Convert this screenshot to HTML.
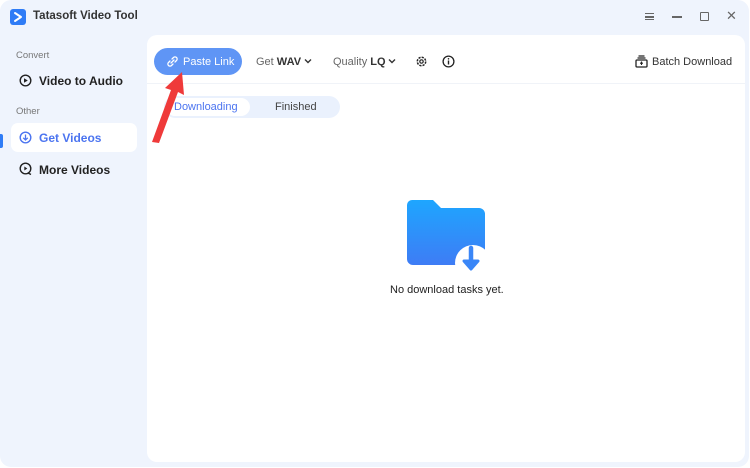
<!DOCTYPE html>
<html><head><meta charset="utf-8"><style>
*{margin:0;padding:0;box-sizing:border-box}
body{width:750px;height:468px;background:#fff;font-family:"Liberation Sans",sans-serif;position:relative;overflow:hidden}
.win{position:absolute;left:0;top:0;width:749px;height:467px;background:#eff4fd;border-radius:11px}
.panel{position:absolute;left:147px;top:35px;width:598px;height:427px;background:#fff;border-radius:10px}
.abs{position:absolute}
.t{font-size:13px;color:#222;white-space:nowrap}
</style></head><body>
<div class="win">
  <svg class="abs" style="left:10px;top:9px" width="16" height="16" viewBox="0 0 16 16"><rect width="16" height="16" rx="3" fill="#2f7cf6"/><path d="M5 4 L11 8 L5 12" stroke="#fff" stroke-width="2" fill="none" stroke-linecap="round" stroke-linejoin="round"/></svg>
  <div class="abs t" style="left:33px;top:10px;font-size:11.5px;font-weight:bold;color:#333">Tatasoft Video Tool</div>
  <div class="abs" style="left:645px;top:13px;width:9px;height:7px;border-top:1.5px solid #666;border-bottom:1.5px solid #666"></div>
  <div class="abs" style="left:645px;top:16px;width:9px;height:1.5px;background:#666"></div>
  <div class="abs" style="left:672px;top:16px;width:10px;height:1.5px;background:#666"></div>
  <div class="abs" style="left:700px;top:12px;width:9px;height:9px;border:1.5px solid #666;border-radius:1px"></div>
  <div class="abs" style="left:726px;top:8px;font-size:13px;color:#666">✕</div>

  <div class="abs" style="left:16px;top:50px;font-size:9.5px;color:#777">Convert</div>
  <svg class="abs" style="left:19px;top:74px" width="13" height="13" viewBox="0 0 13 13"><circle cx="6.5" cy="6.5" r="5.3" fill="none" stroke="#222" stroke-width="1.4"/><path d="M5 4.3 L8.8 6.5 L5 8.7Z" fill="#222"/></svg>
  <div class="abs t" style="left:39px;top:74px;font-size:12px;font-weight:bold">Video to Audio</div>
  <div class="abs" style="left:16px;top:106px;font-size:9.5px;color:#777">Other</div>
  <div class="abs" style="left:0;top:134px;width:3px;height:14px;background:#2f7cf6;border-radius:0 2px 2px 0"></div>
  <div class="abs" style="left:11px;top:123px;width:126px;height:29px;background:#fff;border-radius:7px"></div>
  <svg class="abs" style="left:19px;top:131px" width="13" height="13" viewBox="0 0 13 13"><circle cx="6.5" cy="6.5" r="5.3" fill="none" stroke="#4b74f0" stroke-width="1.4"/><path d="M6.5 3.5V9M4.2 6.8L6.5 9L8.8 6.8" fill="none" stroke="#4b74f0" stroke-width="1.3"/></svg>
  <div class="abs t" style="left:39px;top:131px;font-size:12px;font-weight:bold;color:#4b74f0">Get Videos</div>
  <svg class="abs" style="left:19px;top:162px" width="13" height="14" viewBox="0 0 13 14"><circle cx="6.5" cy="6.5" r="5.3" fill="none" stroke="#222" stroke-width="1.4"/><path d="M5.3 4.5 L8.3 6.5 L5.3 8.5Z" fill="#222"/><path d="M9 11 L12 12.5" stroke="#222" stroke-width="1.4"/></svg>
  <div class="abs t" style="left:39px;top:163px;font-size:12px;font-weight:bold">More Videos</div>

  <div class="panel"></div>
  <div class="abs" style="left:147px;top:83px;width:598px;height:1px;background:#f0f3f8"></div>
  <div class="abs" style="left:154px;top:48px;width:88px;height:27px;background:#5f95f5;border-radius:14px"></div>
  <svg class="abs" style="left:166px;top:55px" width="13" height="13" viewBox="0 0 13 13"><path d="M5 8 L8 5 M4 6 L2.5 7.5a2 2 0 0 0 3 3 L7 9 M9 7 L10.5 5.5a2 2 0 0 0-3-3 L6 4" fill="none" stroke="#fff" stroke-width="1.3" stroke-linecap="round"/></svg>
  <div class="abs t" style="left:183px;top:56px;font-size:11px;color:#fff">Paste Link</div>
  <div class="abs t" style="left:256px;top:56px;font-size:11px;color:#666">Get <b style="color:#333;font-weight:bold">WAV</b></div>
  <svg class="abs" style="left:304px;top:58px" width="8" height="6"><path d="M1 1.5L4 4.5L7 1.5" fill="none" stroke="#333" stroke-width="1.4"/></svg>
  <div class="abs t" style="left:333px;top:56px;font-size:11px;color:#666">Quality <b style="color:#333;font-weight:bold">LQ</b></div>
  <svg class="abs" style="left:388px;top:58px" width="8" height="6"><path d="M1 1.5L4 4.5L7 1.5" fill="none" stroke="#333" stroke-width="1.4"/></svg>
  <svg class="abs" style="left:415px;top:55px" width="13" height="13" viewBox="0 0 13 13"><circle cx="6.5" cy="6.5" r="4.2" fill="none" stroke="#222" stroke-width="1.5" stroke-dasharray="2.2 1.1"/><circle cx="6.5" cy="6.5" r="1.7" fill="none" stroke="#222" stroke-width="1.2"/></svg>
  <svg class="abs" style="left:442px;top:55px" width="13" height="13" viewBox="0 0 13 13"><circle cx="6.5" cy="6.5" r="5.4" fill="none" stroke="#222" stroke-width="1.3"/><path d="M6.5 5.5V9.5" stroke="#222" stroke-width="1.4"/><circle cx="6.5" cy="3.8" r=".8" fill="#222"/></svg>
  <svg class="abs" style="left:635px;top:55px" width="13" height="13" viewBox="0 0 13 13"><rect x="1" y="5" width="11" height="7" rx="1" fill="none" stroke="#222" stroke-width="1.3"/><path d="M2.5 3H10.5M3.5 1H9.5" stroke="#222" stroke-width="1.2"/><path d="M6.5 6.5V10M5 8.2H8" stroke="#222" stroke-width="1.1"/></svg>
  <div class="abs t" style="left:652px;top:56px;font-size:11px;color:#333">Batch Download</div>

  <div class="abs" style="left:164px;top:96px;width:176px;height:22px;background:#eaf1fd;border-radius:11px"></div>
  <div class="abs" style="left:166px;top:98px;width:84px;height:18px;background:#fff;border-radius:9px"></div>
  <div class="abs t" style="left:174px;top:101px;font-size:11px;color:#4b74f0">Downloading</div>
  <div class="abs t" style="left:275px;top:101px;font-size:11px;color:#444">Finished</div>

  <svg class="abs" style="left:406px;top:199px" width="80" height="74" viewBox="0 0 80 74">
    <defs><linearGradient id="g" x1="0" y1="0" x2="0" y2="1"><stop offset="0" stop-color="#1ea6ff"/><stop offset="1" stop-color="#3e7cf5"/></linearGradient></defs>
    <path d="M6 1H27L35 9H73a6 6 0 0 1 6 6V60a6 6 0 0 1-6 6H7a6 6 0 0 1-6-6V6a5 5 0 0 1 5-5Z" fill="url(#g)"/>
    <circle cx="67" cy="64" r="18" fill="#fff"/>
    <path d="M65 49V67" stroke="#3a86f7" stroke-width="4.5" stroke-linecap="round"/>
    <path d="M58 62L65 70L72 62Z" fill="#3a86f7" stroke="#3a86f7" stroke-width="3" stroke-linejoin="round"/>
  </svg>
  <div class="abs t" style="left:390px;top:284px;font-size:11px;color:#222">No download tasks yet.</div>

  <svg class="abs" style="left:148px;top:70px" width="40" height="74" viewBox="0 0 40 74"><path d="M4 72 L23 20 L17 18 L34 2 L36 25 L30 22 L11 73Z" fill="#ef3a3a"/></svg>
</div>
</body></html>
